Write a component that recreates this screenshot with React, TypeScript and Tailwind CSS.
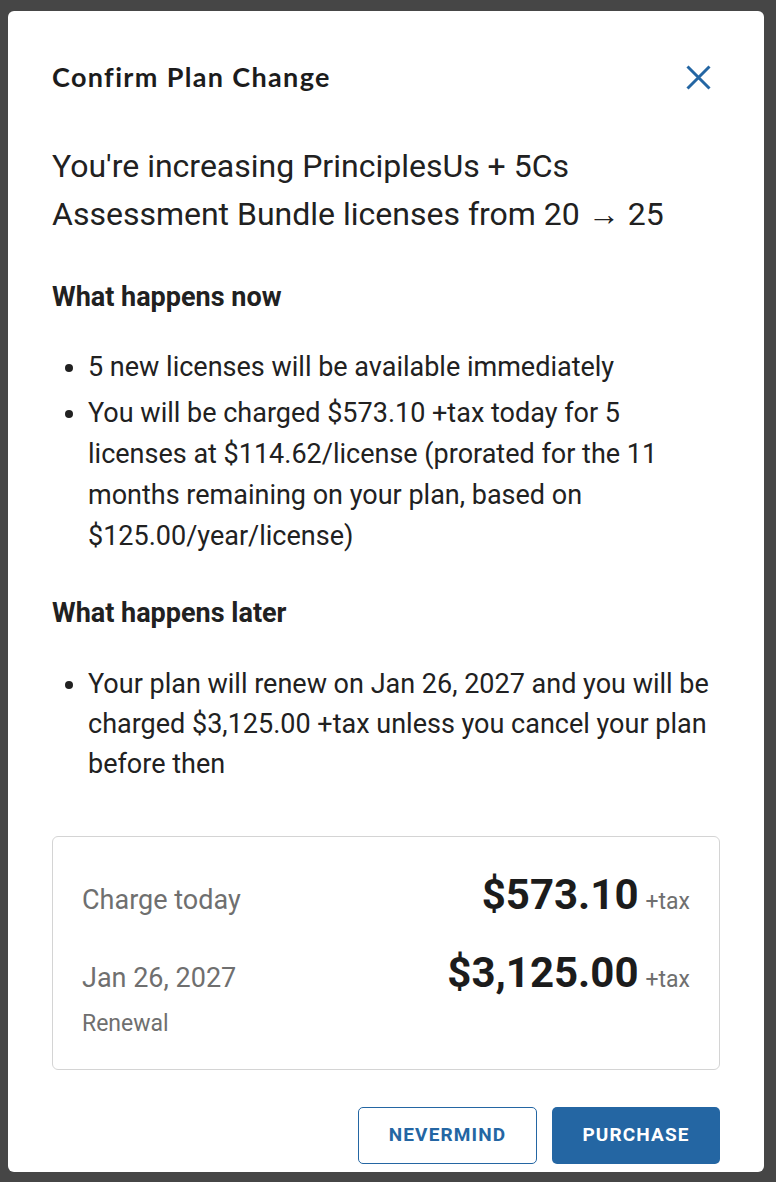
const body = { fontFamily: 'Roboto, "Liberation Sans", sans-serif' };
const heading = { fontFamily: 'Lato, "Noto Sans", sans-serif' };

function CloseIcon() {
  return (
    <svg width="25" height="25" viewBox="0 0 25 25" fill="none" stroke="#2466a3" strokeWidth="3">
      <path d="M1.5 1.5 23.5 23.5M23.5 1.5 1.5 23.5" />
    </svg>
  );
}

export default function App() {
  return (
    <div className="min-h-screen w-full bg-[#464646] pt-[11px] pl-[8px] pb-[10px]" style={body}>
      <div className="w-[756px] h-[1161px] rounded-[6px] bg-white flex flex-col overflow-hidden">
        <div className="flex h-[38px] mt-[47px] items-center justify-between pl-[44px] pr-[53px]">
          <h1 className="text-[27px] leading-[32px] font-bold tracking-[0.05em] text-[#1c1c1c]" style={heading}>
            Confirm Plan Change
          </h1>
          <button className="flex items-center justify-center">
            <CloseIcon />
          </button>
        </div>

        <div className="px-[44px] text-[#212121]">
          <p className="mt-[46px] text-[32px] leading-[48px]">
            You're increasing PrinciplesUs + 5Cs Assessment Bundle licenses from 20 → 25
          </p>

          <h2 className="mt-[43px] text-[27px] leading-[32px] font-bold">What happens now</h2>
          <ul className="mt-[34px] list-disc pl-[36px] text-[27px] leading-[41px]">
            <li>5 new licenses will be available immediately</li>
            <li className="mt-[5px]">
              You will be charged $573.10 +tax today for 5 licenses at $114.62/license (prorated for the 11 months
              remaining on your plan, based on $125.00/year/license)
            </li>
          </ul>

          <h2 className="mt-[40px] text-[27px] leading-[32px] font-bold">What happens later</h2>
          <ul className="mt-[35px] list-disc pl-[36px] text-[27px] leading-[40px]">
            <li>
              Your plan will renew on Jan 26, 2027 and you will be charged $3,125.00 +tax unless you cancel your plan
              before then
            </li>
          </ul>

          <div className="mt-[52px] rounded-[6px] border border-[#d4d4d4] px-[29px] pt-[33px] pb-[31px]">
            <div className="flex items-baseline justify-between">
              <span className="text-[27px] leading-[50px] text-[#6f6f6f]">Charge today</span>
              <span className="flex items-baseline gap-[7px]">
                <span className="text-[42px] leading-[50px] font-bold text-[#1c1c1c]">$573.10</span>
                <span className="text-[23px] text-[#6f6f6f]">+tax</span>
              </span>
            </div>
            <div className="mt-[23px] flex items-baseline justify-between">
              <div className="flex flex-col">
                <span className="text-[27px] leading-[50px] text-[#6f6f6f]">Jan 26, 2027</span>
                <span className="mt-[7px] text-[23px] leading-[28px] text-[#6f6f6f]">Renewal</span>
              </div>
              <span className="flex items-baseline gap-[7px]">
                <span className="text-[42px] leading-[50px] font-bold text-[#1c1c1c]">$3,125.00</span>
                <span className="text-[23px] text-[#6f6f6f]">+tax</span>
              </span>
            </div>
          </div>

          <div className="mt-[37px] flex justify-end gap-[15px]">
            <button className="w-[179px] h-[57px] rounded-[5px] border border-[#2466a3] text-[#2466a3] text-[19px] font-bold tracking-[0.06em]">
              NEVERMIND
            </button>
            <button className="w-[168px] h-[57px] rounded-[5px] bg-[#2466a3] text-white text-[19px] font-bold tracking-[0.06em]">
              PURCHASE
            </button>
          </div>
        </div>
      </div>
    </div>
  );
}
